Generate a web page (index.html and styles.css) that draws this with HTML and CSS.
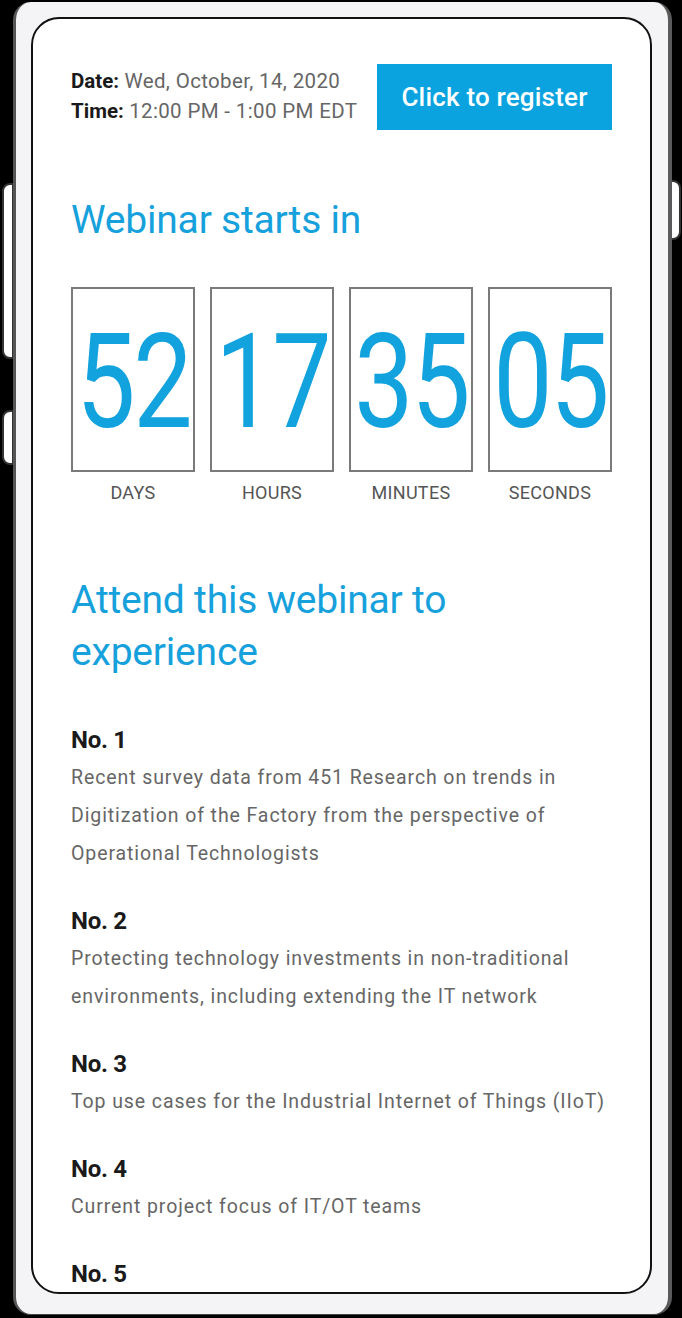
FILE: index.html
```html
<!DOCTYPE html>
<html lang="en">
<head>
<meta charset="utf-8">
<link rel="stylesheet" href="styles.css">
</head>
<body>
<div class="device">
  <span class="btn-side btn-left-1"></span>
  <span class="btn-side btn-left-2"></span>
  <span class="btn-side btn-right-1"></span>
  <div class="phone">
    <div class="screen">
      <div class="header">
        <div class="when">
          <div><b>Date:</b> Wed, October, 14, 2020</div>
          <div><b>Time:</b> 12:00 PM - 1:00 PM EDT</div>
        </div>
        <a class="register">Click to register</a>
      </div>

      <h2 class="title">Webinar starts in</h2>

      <div class="countdown">
        <div class="unit"><div class="box"><span class="num">52</span></div><div class="label">DAYS</div></div>
        <div class="unit"><div class="box"><span class="num">17</span></div><div class="label">HOURS</div></div>
        <div class="unit"><div class="box"><span class="num">35</span></div><div class="label">MINUTES</div></div>
        <div class="unit"><div class="box"><span class="num">05</span></div><div class="label">SECONDS</div></div>
      </div>

      <h2 class="title attend">Attend this webinar to<br>experience</h2>

      <div class="items">
        <div class="item">
          <h3>No. 1</h3>
          <p>Recent survey data from 451 Research on trends in<br>Digitization of the Factory from the perspective of<br>Operational Technologists</p>
        </div>
        <div class="item">
          <h3>No. 2</h3>
          <p>Protecting technology investments in non-traditional<br>environments, including extending the IT network</p>
        </div>
        <div class="item">
          <h3>No. 3</h3>
          <p>Top use cases for the Industrial Internet of Things (IIoT)</p>
        </div>
        <div class="item">
          <h3>No. 4</h3>
          <p>Current project focus of IT/OT teams</p>
        </div>
        <div class="item">
          <h3>No. 5</h3>
        </div>
      </div>
    </div>
  </div>
</div>
</body>
</html>
```

FILE: styles.css
```css
* { box-sizing: border-box; }
html, body { margin: 0; padding: 0; }
body {
  width: 682px;
  height: 1318px;
  background: #000;
  overflow: hidden;
  font-family: Roboto, "Liberation Sans", sans-serif;
}
.device {
  position: relative;
  width: 682px;
  height: 1318px;
  padding: 2px 10px 3px 13px;
}
.btn-side {
  position: absolute;
  background: #fff;
  border: 2px solid #333;
}
.btn-left-1 { left: 2px; top: 183px; width: 12px; height: 176px; border-radius: 8px 0 0 8px; }
.btn-left-2 { left: 2px; top: 410px; width: 12px; height: 55px; border-radius: 8px 0 0 8px; }
.btn-right-1 { right: 1px; top: 180px; width: 12px; height: 60px; border-radius: 0 8px 8px 0; }
.phone {
  position: relative;
  height: 100%;
  background: #f4f4f6;
  border-left: 3px solid #555;
  border-right: 4px solid #5a5a5a;
  border-bottom: 1px solid #444;
  border-radius: 18px;
  padding: 15px 16px 20px 15px;
}
.screen {
  height: 100%;
  background: #fff;
  border: 2px solid #111;
  border-radius: 28px;
  overflow: hidden;
  padding: 45px 38px 0 38px;
}
.header {
  display: flex;
  justify-content: space-between;
  align-items: center;
}
.when {
  font-size: 20.5px;
  line-height: 30px;
  color: #666;
  letter-spacing: 0.35px;
  margin-top: -2px;
}
.when b { color: #1a1a1a; font-weight: 700; letter-spacing: 0; }
.register {
  display: block;
  width: 235px;
  height: 66px;
  line-height: 66px;
  text-align: center;
  background: #0aa3df;
  color: #fff;
  font-size: 26px;
  font-weight: 500;
  letter-spacing: 0.2px;
}
.title {
  margin: 66px 0 0;
  font-size: 39px;
  line-height: 48px;
  font-weight: 400;
  color: #16a1dc;
  letter-spacing: -0.2px;
}
.countdown {
  margin-top: 43px;
  display: grid;
  grid-template-columns: repeat(4, 124px);
  justify-content: space-between;
}
.box {
  height: 185px;
  border: 2px solid #7a7a7a;
  display: flex;
  align-items: center;
  justify-content: center;
  overflow: hidden;
}
.num {
  display: inline-block;
  font-size: 132px;
  line-height: 1;
  color: #12a2dd;
  transform: scaleX(0.8);
  letter-spacing: -3px;
  margin-top: 4px;
}
.label {
  margin-top: 9px;
  text-align: center;
  font-size: 18px;
  line-height: 24px;
  color: #555;
  letter-spacing: 0.3px;
}
.attend {
  margin-top: 69px;
  line-height: 52px;
}
.items { margin-top: 46px; }
.item { margin-bottom: 32px; }
.item h3 {
  margin: 0 0 3px;
  font-size: 24px;
  line-height: 32px;
  font-weight: 700;
  color: #1a1a1a;
  letter-spacing: -0.3px;
}
.item p {
  margin: 0;
  font-size: 19.5px;
  line-height: 38px;
  color: #666;
  letter-spacing: 0.9px;
  white-space: nowrap;
}
```
